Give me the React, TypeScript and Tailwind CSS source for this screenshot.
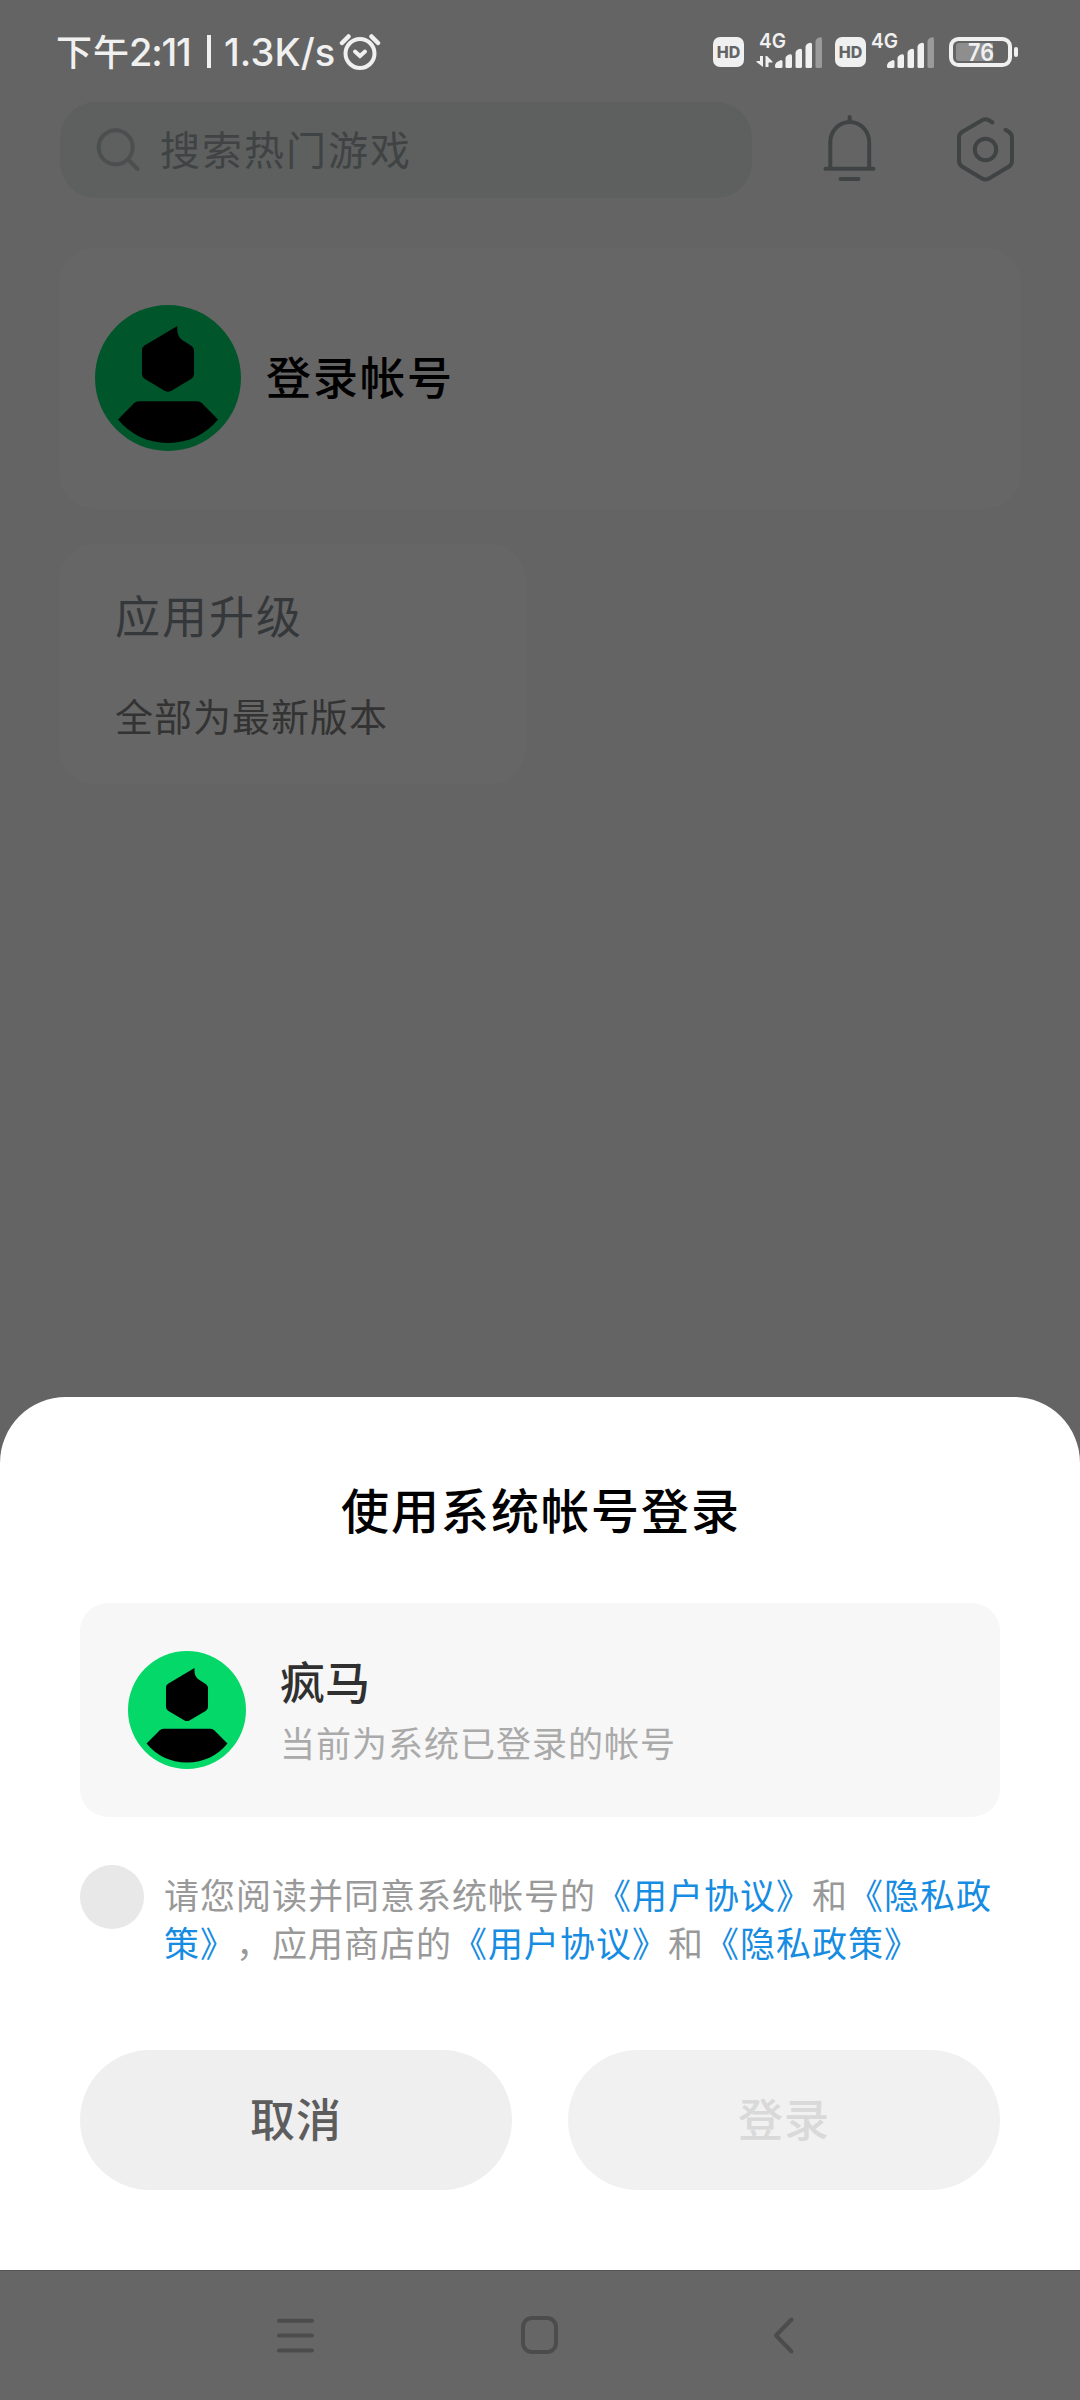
const Avatar = ({ size, color, className }: { size: number; color: string; className?: string }) => (
  <svg width={size} height={size} viewBox="0 0 146 146" className={className}>
    <circle cx="73" cy="73" r="73" fill={color} />
    <path d="M82.3 21C82 28 83 32 88 35.5L96.5 41Q99 42.8 99 45.5V69Q99 72 96.5 73.8L76 86Q73 87.5 70 86L49.5 73.8Q47 72 47 69V45Q47 42.3 49.5 40.6Z" />
    <path d="M44 96.3H102Q105 96.3 107 98.3L123 114.5C111 129 94 138 73 138S35 129 23 114.5L39 98.3Q41 96.3 44 96.3Z" />
  </svg>
)

const HdBadge = () => (
  <div className="flex h-[30px] w-[31px] items-center justify-center rounded-[7px] bg-[#f0f0f0] font-['Inter'] text-[16px] leading-none font-extrabold text-[#646464]">
    HD
  </div>
)

const Signal = ({ data }: { data?: boolean }) => (
  <svg width="66" height="40" viewBox="0 0 66 40" fill="#f0f0f0" className="overflow-visible">
    <text x="0" y="18" fontFamily="Inter" fontSize="20.5" fontWeight="600" textLength="27" lengthAdjust="spacingAndGlyphs">
      4G
    </text>
    {data && <path d="M1 26H4V37L-2.500 32V31H1ZM6.500 37V26H8L13.500 31.500V32.500H9.500V37Z" />}
    <g transform="translate(16 0)">
      <path d="M0 36Q0 33 3 31.500L6 30Q7.500 30 7.500 31.500V36.500Q7.500 38 6 38H1.500Q0 38 0 36.500Z" />
      <path d="M10.500 28Q10.500 26 14 24.500Q17 23.500 17 26V36.500Q17 38 15.500 38H12Q10.500 38 10.500 36.500Z" />
      <path d="M20.500 23Q20.500 20.500 24 19Q27 18 27 20.500V36.500Q27 38 25.500 38H22Q20.500 38 20.500 36.500Z" />
      <path d="M30.500 17Q30.500 14.500 34 13Q37 12 37 14.500V36.500Q37 38 35.500 38H32Q30.500 38 30.500 36.500Z" />
      <path
        d="M40.500 11.500Q40.500 9 44 7.500Q47 6.500 47 9V36.500Q47 38 45.500 38H42Q40.500 38 40.500 36.500Z"
        fill="#9a9a9a"
      />
    </g>
  </svg>
)

const StatusBar = () => (
  <div className="flex h-[102px] items-start pt-[30px] text-[#f0f0f0]">
    <div className="flex h-10 w-[656px] items-center pl-[56px] text-[36px] leading-none font-medium whitespace-nowrap">
      <span className="w-[73px] tracking-[1px]">下午</span>
      <span className="w-[78px] pt-[3px] font-['Inter'] text-[38px] tracking-[-1.2px]">2:11</span>
      <span className="mt-[3px] h-[33px] w-[4px] bg-[#f0f0f0]" />
      <span className="ml-[13px] w-[115px] pt-[3px] font-['Inter'] text-[38px] tracking-[0.1px]">1.3K/s</span>
      <svg width="42" height="40" viewBox="0 0 42 40" fill="none" stroke="#f0f0f0" strokeLinecap="round">
        <circle cx="21" cy="23.500" r="14.500" strokeWidth="4" />
        <path d="M16 21.500L21 26L26 21.500" strokeWidth="4" />
        <path d="M3 13L9.500 6.500M39 13L32.500 6.500" strokeWidth="4.500" />
      </svg>
    </div>
    <div className="flex h-10 items-center pl-[57px]">
      <div className="pt-[3px]">
        <HdBadge />
      </div>
      <div className="ml-[15px] h-10 w-[66px]">
        <Signal data />
      </div>
      <div className="ml-[10px] pt-[3px]">
        <HdBadge />
      </div>
      <div className="ml-[5px] h-10 w-[66px]">
        <Signal />
      </div>
      <svg width="72" height="40" viewBox="0 0 72 40" className="ml-[12px]">
        <rect x="2" y="9" width="59" height="26" rx="7.500" fill="none" stroke="#f0f0f0" strokeWidth="4" />
        <path d="M10 13H44V31H10Q7 31 7 28V16Q7 13 10 13Z" fill="#8e8e8e" />
        <rect x="65" y="17" width="4" height="10" rx="2" fill="#f0f0f0" />
        <text x="19" y="31" fill="#f0f0f0" fontFamily="Inter" fontSize="24" fontWeight="600" textLength="26" lengthAdjust="spacingAndGlyphs">
          76
        </text>
      </svg>
    </div>
  </div>
)

const Header = () => (
  <div className="flex h-24 items-center pl-[60px]">
    <div className="flex h-24 w-[692px] items-center rounded-[36px] bg-[#5d605f] pl-9">
      <svg width="46" height="46" viewBox="0 0 46 46" fill="none" stroke="#4c4f50" strokeWidth="4" strokeLinecap="round">
        <circle cx="19.700" cy="20.300" r="17" />
        <path d="M32 32.500L41.500 42" />
      </svg>
      <span className="ml-[18px] pb-[5px] text-[40px] leading-none tracking-[2px] text-[#404344]">搜索热门游戏</span>
    </div>
    <svg width="56" height="70" viewBox="0 0 56 70" fill="none" stroke="#404344" strokeWidth="4" strokeLinecap="round" className="mb-1 ml-[70px]">
      <path d="M27.700 4V9M8.300 55V29.500C8.300 18 17 9 27.700 9S47.200 18 47.200 29.500V55M3.500 55.700H51.500M18.500 66H36.500" />
    </svg>
    <svg width="60" height="68" viewBox="0 0 60 68" fill="none" stroke="#404344" strokeWidth="4" strokeLinecap="round" className="ml-[77px]">
      <circle cx="30.500" cy="33.500" r="10.700" />
      <path d="M37.500 6.500L33.500 4Q30.500 2.300 27.500 4L7 16Q4 18 4 21.500V45Q4 48.500 7 50.500L27 62.500Q30.500 64.500 34 62.500L54 50.500Q57 48.500 57 45V21.500Q57 18 54 16L50.500 13.800" />
    </svg>
  </div>
)

const App = () => {
  return (
    <div className="flex h-[2400px] w-[1080px] flex-col overflow-hidden bg-[#646464] font-['Noto_Sans_CJK_SC',sans-serif]">
      <StatusBar />
      <Header />

      <div className="mt-[50px] ml-[59px] flex h-[261px] w-[962px] items-center rounded-[36px] bg-[#666666] pb-px pl-9">
        <Avatar size={146} color="#00562a" />
        <span className="ml-[25px] pb-[6px] text-[45px] leading-none font-medium tracking-[2px] text-black">登录帐号</span>
      </div>

      <div className="mt-[35px] ml-[59px] h-[240px] w-[467px] rounded-[36px] bg-[#666666] pt-[48px] pl-[56px]">
        <div className="text-[45px] leading-none tracking-[2px] text-[#35383a]">应用升级</div>
        <div className="mt-[59px] text-[38px] leading-none tracking-[1px] text-[#333333]">全部为最新版本</div>
      </div>

      <div className="mt-[613px] h-[873px] shrink-0 rounded-t-[66px] bg-white px-20 pt-[87px]">
        <h1 className="pl-0.5 text-center text-[48px] leading-none font-medium tracking-[2px] text-black">使用系统帐号登录</h1>

        <div className="mt-[71px] flex h-[214px] items-center rounded-[28px] bg-[#f7f7f7] pl-12">
          <Avatar size={118} color="#04d869" />
          <div className="ml-[34px] pb-[3px]">
            <div className="text-[45px] leading-none font-medium text-[#303030]">疯马</div>
            <div className="mt-[21px] text-[35px] leading-none tracking-[1px] text-[#aaaaaa]">当前为系统已登录的帐号</div>
          </div>
        </div>

        <div className="mt-12 flex h-[112px]">
          <div className="h-16 w-16 shrink-0 rounded-full bg-[#e8e8e8]" />
          <div className="ml-[20px] pt-[5px] text-[35px] leading-[48px] tracking-[1px] whitespace-nowrap text-[#999999] [text-spacing-trim:space-all]">
            请您阅读并同意系统帐号的<span className="text-[#168ce2]">《用户协议》</span>和
            <span className="text-[#168ce2]">《隐私政</span>
            <br />
            <span className="text-[#168ce2]">策》</span>，应用商店的
            <span className="text-[#168ce2]">《用户协议》</span>和
            <span className="text-[#168ce2]">《隐私政策》</span>
          </div>
        </div>

        <div className="mt-[73px] flex gap-14">
          <button className="h-[140px] w-[432px] rounded-full bg-[#efefef] pb-[5px] text-[45px] leading-none font-medium tracking-[1px] text-[#5d5d5d]">
            取消
          </button>
          <button className="h-[140px] w-[432px] rounded-full bg-[#f1f1f1] pb-[5px] text-[45px] leading-none font-medium tracking-[1px] text-[#d9d9d9]">
            登录
          </button>
        </div>
      </div>

      <div className="flex h-[130px] shrink-0 border-t border-[#555555] bg-[#666666]">
        <svg width="1080" height="129" viewBox="0 0 1080 129" fill="none" stroke="#4c4c4c" strokeWidth="4" strokeLinecap="round" strokeLinejoin="round">
          <path d="M279 49.700H312M279 64.500H312M279 79.500H312" />
          <rect x="523" y="47" width="33" height="34" rx="9" />
          <path d="M791.500 48.500L776 64.500L791.500 80.500" />
        </svg>
      </div>
    </div>
  )
}

export default App
